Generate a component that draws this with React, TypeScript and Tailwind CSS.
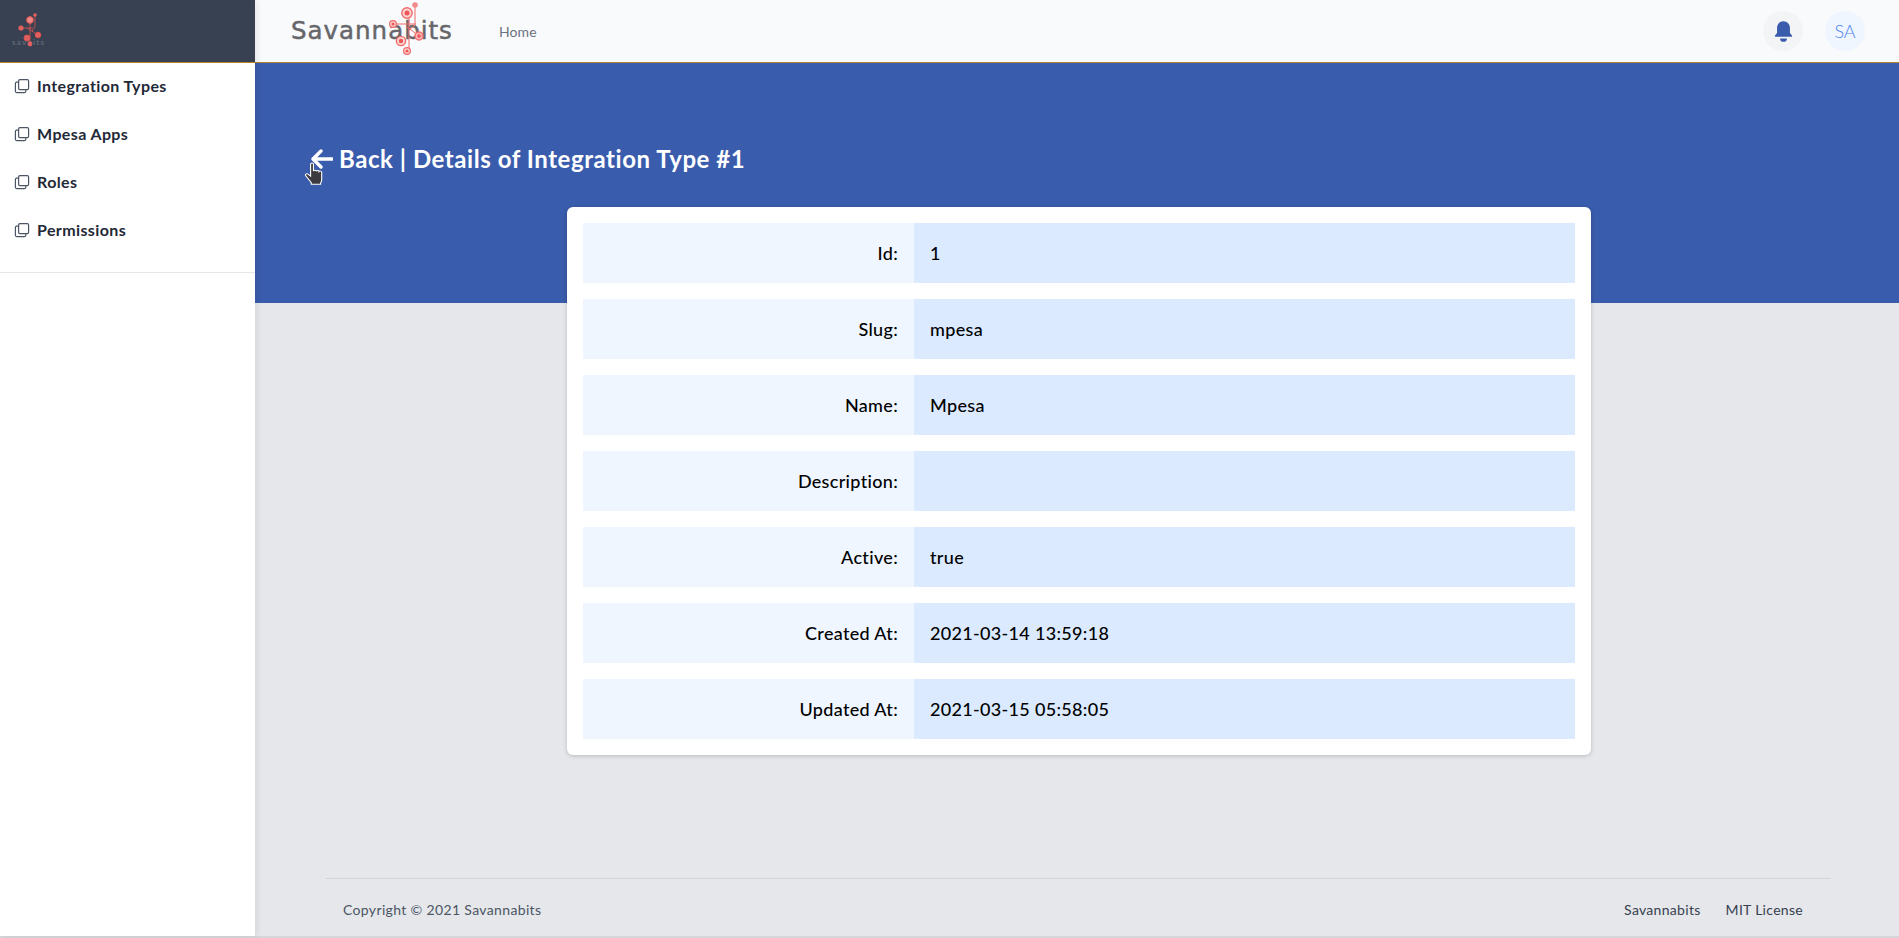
const rows: [string, string][] = [
  ["Id:", "1"],
  ["Slug:", "mpesa"],
  ["Name:", "Mpesa"],
  ["Description:", ""],
  ["Active:", "true"],
  ["Created At:", "2021-03-14 13:59:18"],
  ["Updated At:", "2021-03-15 05:58:05"],
];
const nav = ["Integration Types", "Mpesa Apps", "Roles", "Permissions"];

function CopyIcon() {
  return (
    <svg width="16" height="16" viewBox="0 0 16 16" fill="none" stroke="#4b5563" strokeWidth="1.2" className="shrink-0">
      <rect x="4.6" y="1.6" width="10" height="10" rx="1.4" />
      <path d="M4.6 4.2H2.8a1.4 1.4 0 0 0-1.4 1.4v7.6a1.4 1.4 0 0 0 1.4 1.4h7.6a1.4 1.4 0 0 0 1.4-1.4v-1.6" />
    </svg>
  );
}

function BigNetwork() {
  return (
    <svg width="50" height="56" viewBox="0 0 50 56" fill="none" className="absolute left-[89px] top-0" stroke="#f26a6a">
      <path d="M35 5v20l-6 5M12 24h24M29 14v38M26 26l14 11" strokeWidth="1" />
      <circle cx="35" cy="5" r="2.8" fill="#f58a8a" strokeWidth="0" />
      <circle cx="27" cy="13" r="5.2" strokeWidth="1.4" fill="#fbd5d5" />
      <circle cx="27" cy="13" r="2.5" fill="#ee5555" strokeWidth="0" />
      <circle cx="13" cy="24" r="3.4" strokeWidth="1.2" fill="#fbd5d5" />
      <circle cx="13" cy="24" r="1.5" fill="#ee5555" strokeWidth="0" />
      <circle cx="21" cy="41" r="4.6" strokeWidth="1.4" fill="#fbd5d5" />
      <circle cx="21" cy="41" r="2.2" fill="#ee5555" strokeWidth="0" />
      <circle cx="39" cy="36" r="4" strokeWidth="1.3" fill="#f9b5b5" />
      <circle cx="39" cy="36" r="1.8" fill="#ee5555" strokeWidth="0" />
      <circle cx="27" cy="51" r="3.4" strokeWidth="1.2" fill="#fbd5d5" />
      <circle cx="27" cy="51" r="1.6" fill="#ee5555" strokeWidth="0" />
    </svg>
  );
}

function SmallNetwork() {
  return (
    <svg width="34" height="50" viewBox="0 0 34 50" fill="none" className="absolute left-[12px] top-0" stroke="#d9534f">
      <path d="M23 15v12l-3 4M9 28h12M18 20v24M15 28l11 7" strokeWidth="0.8" />
      <circle cx="23" cy="15" r="1.8" fill="#e06060" strokeWidth="0" />
      <circle cx="18" cy="20" r="3.4" strokeWidth="1" fill="#e88" />
      <circle cx="9" cy="28" r="2.6" fill="#e06060" strokeWidth="0" />
      <circle cx="15" cy="38" r="3" strokeWidth="1" fill="#e06060" />
      <circle cx="26" cy="35" r="2.8" strokeWidth="1" fill="#e06060" />
      <circle cx="18" cy="44" r="2.4" fill="#e06060" strokeWidth="0" />
    </svg>
  );
}

function HandCursor() {
  return (
    <svg width="22" height="25" viewBox="0 0 20 26" preserveAspectRatio="none" className="absolute left-[-7px] top-[17px]">
      <path
        d="M6 2.2c0-1.5 2.6-1.5 2.6 0v7.2c.3-1.3 2.5-1.2 2.6.2.4-1.1 2.4-1 2.5.4.5-.9 2.4-.7 2.4.8v7.4c0 1.5-.4 2.6-1 3.6v1.4H6.6v-1.6L1.6 14.4c-1-1.3.6-2.9 2-1.8L6 14.8z"
        fill="#3b3b3f"
        stroke="#ffffff"
        strokeWidth="1"
      />
    </svg>
  );
}

export default function App() {
  return (
    <div className="flex h-[938px] w-full flex-col overflow-hidden bg-[#e5e7eb] font-['Lato','Noto_Sans',sans-serif]">
      <div className="flex min-h-0 flex-1">
        <aside className="z-10 flex w-[255px] shrink-0 flex-col bg-white shadow-[2px_0_6px_rgba(0,0,0,0.08)]">
          <div className="relative h-[63px] shrink-0 border-b border-[#b7832f] bg-[#374151]">
            <span className="absolute left-[12px] top-[36px] text-[8px] leading-[12px] font-bold tracking-[1.2px] text-[#5f6875]">savbits</span>
            <SmallNetwork />
          </div>
          <nav className="flex flex-col border-b border-[#e5e7eb] pb-[17px]">
            {nav.map((n) => (
              <a key={n} className="flex h-[48px] items-center gap-[7px] pb-[2px] pl-[14px] text-[16px] font-bold tracking-[0.38px] text-[#1f2937]">
                <CopyIcon />
                {n}
              </a>
            ))}
          </nav>
        </aside>
        <main className="flex min-w-0 flex-1 flex-col">
          <header className="flex h-[63px] shrink-0 items-center border-b border-[#b7832f] bg-[#f9fafb] pl-[36px] pr-[34px]">
            <div className="relative flex h-[62px] w-[208px] items-center">
              <span className="font-['DejaVu_Sans',sans-serif] text-[24.5px] font-normal tracking-[1px] text-[#66666b] [-webkit-text-stroke:0.5px_#66666b]">Savannabits</span>
              <BigNetwork />
            </div>
            <a className="text-[14px] font-normal tracking-[0.1px] text-[#6b7280]">Home</a>
            <div className="ml-auto flex items-center gap-[22px]">
              <div className="flex h-[40px] w-[40px] items-center justify-center rounded-full bg-[#f3f4f6]">
                <svg width="23" height="23" viewBox="0 0 20 20" fill="#3a5cac">
                  <path d="M10 1c-3.3 0-5.6 2.6-5.6 5.8v4.6L2.6 13.4c-.3.4-.1 1.1.5 1.1h13.8c.6 0 .8-.7.5-1.1l-1.8-2V6.8C15.6 3.6 13.3 1 10 1zM7 16h6a3 3 0 0 1-6 0z" />
                </svg>
              </div>
              <div className="flex h-[40px] w-[40px] items-center justify-center rounded-full bg-[#eff6ff] text-[18px] font-light text-[#4f84ec]">SA</div>
            </div>
          </header>
          <section className="h-[240px] shrink-0 bg-[#3a5cac] pl-[56px] pt-[82px]">
            <div className="relative flex h-[28px] items-center gap-[6px] text-[24px] font-bold tracking-[0.55px] text-white">
              <svg width="22" height="20" viewBox="0 0 22 20" fill="none" stroke="white" strokeWidth="3.4" strokeLinecap="round" strokeLinejoin="round">
                <path d="M10 2l-8 8 8 8M3 10h18" />
              </svg>
              <span>Back | Details of Integration Type #1</span>
              <HandCursor />
            </div>
          </section>
          <div className="z-10 ml-[312px] mt-[-96px] flex w-[1024px] flex-col gap-[16px] rounded-[6px] bg-white p-[16px] shadow-[0_1px_4px_rgba(0,0,0,0.2)]">
            {rows.map(([k, v]) => (
              <div key={k} className="flex h-[60px] text-[18px] font-medium leading-[60px] tracking-[0.32px] text-black">
                <div className="w-[331px] bg-[#eff6ff] pr-[16px] text-right">{k}</div>
                <div className="flex-1 bg-[#dbeafe] pl-[16px]">{v}</div>
              </div>
            ))}
          </div>
          <div className="flex-1" />
          <footer className="ml-[71px] mr-[68px] flex h-[58px] items-center justify-between border-t border-[#d1d5db] pl-[17px] pr-[28px] pt-[3px] text-[14px] tracking-[0.35px] text-[#4b5563]">
            <span>Copyright © 2021 Savannabits</span>
            <div className="flex gap-[25px] font-normal tracking-[0.3px] text-[#374151]">
              <a>Savannabits</a>
              <a>MIT License</a>
            </div>
          </footer>
        </main>
      </div>
      <div className="h-[2px] shrink-0 bg-[#d6d7da]" />
    </div>
  );
}
